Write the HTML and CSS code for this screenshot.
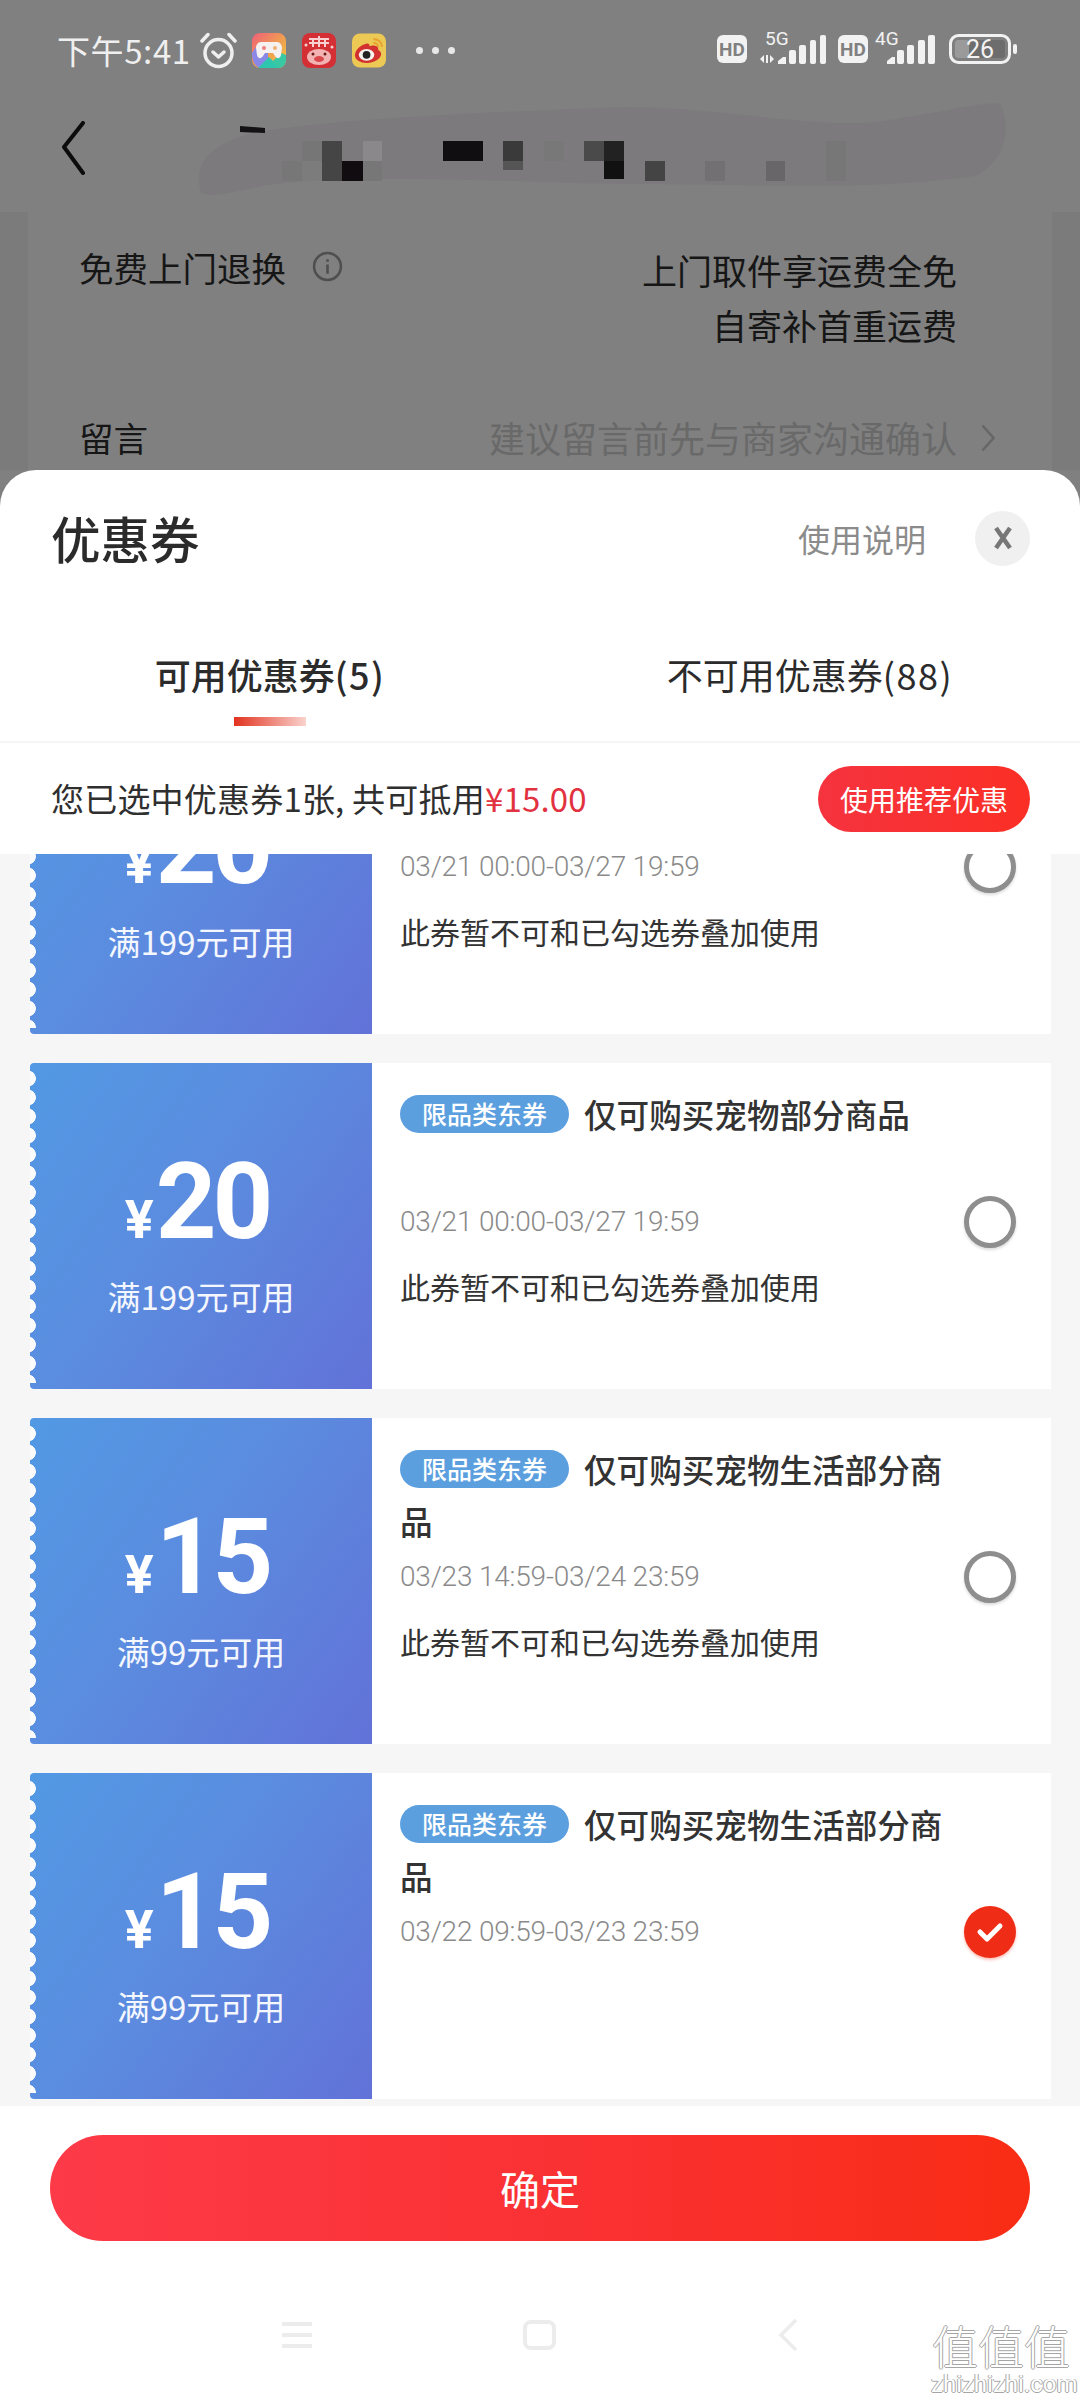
FILE: index.html
```html
<!DOCTYPE html>
<html lang="zh-CN">
<head>
<meta charset="utf-8">
<title>优惠券</title>
<link rel="stylesheet" href="styles.css">
</head>
<body>
<div class="page">
  <div class="backdrop">
    <div class="statusbar">
      <div class="status-left">
        <span class="clock">下午5:41</span>
        <svg class="alarm" viewBox="0 0 37 37" fill="none" stroke="#efefef" stroke-width="3.500" stroke-linecap="round" stroke-linejoin="round">
          <circle cx="18.500" cy="21" r="13.500"/>
          <path d="M2 9 8 2.500M35 9 29 2.500"/>
          <path d="M13 20l5.500 5 5.500-5"/>
        </svg>
        <svg class="app app-first" viewBox="0 0 34 35">
          <defs>
            <linearGradient id="gameA" x1="0" y1="0" x2="1" y2="1">
              <stop offset="0" stop-color="#ef5f7a"/><stop offset=".55" stop-color="#f0a050"/><stop offset="1" stop-color="#f2cb3f"/>
            </linearGradient>
          </defs>
          <rect width="34" height="35" rx="8" fill="url(#gameA)"/>
          <path d="M0 20C0 30 4 35 10 35H16V20L4 14Z" fill="#8a88e6"/>
          <path d="M6 35 17 24 28 35Z" fill="#2fc6b0"/>
          <path d="M34 22V27C34 32 30 35 26 35L20 29 29 20Z" fill="#38c8a4"/>
          <path d="M9 9H25C28 9 30 12 30 15L29 22C28 26 25 26 23 23L21 20H13L11 23C9 26 6 26 5 22L4 15C4 12 6 9 9 9Z" fill="#f6f1f1"/>
          <circle cx="12" cy="15" r="2" fill="#ef7f80"/><circle cx="23" cy="15" r="2" fill="#f0b070"/>
        </svg>
        <svg class="app" viewBox="0 0 34 35">
          <rect width="34" height="35" rx="8" fill="#d32f35"/>
          <path d="M7 6H27M11 6V14M17 3V14M23 6V14M7 10H27" stroke="#f8d0d0" stroke-width="2" fill="none"/>
          <circle cx="4" cy="12" r="1.500" fill="#f8d0d0"/><circle cx="30" cy="14" r="1.500" fill="#f8d0d0"/>
          <ellipse cx="17" cy="24" rx="12" ry="8" fill="#f3b3b3"/>
          <circle cx="11" cy="21" r="1.500" fill="#6b1a1a"/><circle cx="23" cy="21" r="1.500" fill="#6b1a1a"/>
          <ellipse cx="17" cy="26" rx="5" ry="3" fill="#d9484c"/>
        </svg>
        <svg class="app" viewBox="0 0 35 35">
          <rect width="35" height="35" rx="8" fill="#ecc855"/>
          <path d="M13 11C7 13 3 18 3 23 4 29 11 31 18 30 25 29 30 25 30 21 30 18 27 18 27 16 27 12 21 12 18 13 18 10 16 10 13 11Z" fill="#d3312f"/>
          <ellipse cx="15" cy="22" rx="8" ry="6" fill="#f7f2ee"/>
          <circle cx="15" cy="22" r="4" fill="#222"/>
          <path d="M22 6A8 8 0 0 1 31 14M22 10A4 4 0 0 1 27 14" stroke="#e8a030" stroke-width="2" fill="none"/>
        </svg>
        <span class="dots"><i class="dot"></i><i class="dot"></i><i class="dot"></i></span>
      </div>
      <svg class="status-right" viewBox="0 0 300 40">
        <rect x="0" y="5" width="30" height="28" rx="6" fill="#f2f2f2"/>
        <text class="hd" x="15" y="25.500" text-anchor="middle">HD</text>
        <text class="net" x="48" y="15">5G</text>
        <path d="M43 29l4-4v8zM49 25h2v8h-2zM53 25l4 4-4 4z" fill="#f2f2f2"/>
        <g fill="#f2f2f2">
          <path d="M61 34v-3l5-4h3v7z"/>
          <rect x="72" y="20" width="7" height="14" rx="2"/>
          <rect x="82" y="15" width="7" height="19" rx="2"/>
          <rect x="93" y="10" width="6" height="24" rx="2"/>
          <rect x="103" y="5" width="6" height="29" rx="2"/>
        </g>
        <rect x="121" y="5" width="30" height="28" rx="6" fill="#f2f2f2"/>
        <text class="hd" x="136" y="25.500" text-anchor="middle">HD</text>
        <text class="net" x="158" y="15">4G</text>
        <g fill="#f2f2f2">
          <path d="M170 34v-3l5-4h3v7z"/>
          <rect x="180" y="20" width="7" height="14" rx="2"/>
          <rect x="190" y="15" width="7" height="19" rx="2"/>
          <rect x="201" y="10" width="7" height="24" rx="2"/>
          <rect x="211" y="5" width="7" height="29" rx="2"/>
        </g>
        <rect x="233.500" y="5.500" width="59" height="27" rx="8" fill="none" stroke="#f2f2f2" stroke-width="3"/>
        <rect x="238" y="10" width="50" height="18" rx="3" fill="#6d6d6d"/>
        <rect x="238" y="10" width="14" height="18" rx="3" fill="#9a9a9a"/>
        <text class="batt" x="263" y="28" text-anchor="middle">26</text>
        <rect x="296" y="14" width="4" height="10" rx="2" fill="#f2f2f2"/>
      </svg>
    </div>
    <div class="navbar">
      <svg class="nav-back" viewBox="0 0 24 54" fill="none" stroke="#0c0c0c" stroke-width="4" stroke-linecap="round" stroke-linejoin="round">
        <path d="M22 2 3 26 22 52"/>
      </svg>
      <svg class="nav-mask" viewBox="0 0 820 100" aria-hidden="true">
        <path d="M5 92C-5 60 20 42 60 32 150 18 300 12 400 8 500 2 600 28 680 22 740 14 790 0 805 4 815 30 810 60 780 76 660 92 560 84 440 84 340 84 180 72 80 84 40 90 12 100 5 92Z" fill="#7d7a7d"/>
        <path d="M44 26 69 28V33L44 32Z" fill="#141214"/>
        <g shape-rendering="crispEdges">
          <rect x="106" y="41" width="20" height="20" fill="#767676"/>
          <rect x="126" y="41" width="20" height="40" fill="#454545"/>
          <rect x="167" y="41" width="19" height="20" fill="#8b888b"/>
          <rect x="86" y="61" width="20" height="20" fill="#777"/>
          <rect x="106" y="61" width="20" height="20" fill="#7c7c7c"/>
          <rect x="146" y="61" width="21" height="20" fill="#100c10"/>
          <rect x="167" y="61" width="19" height="20" fill="#777"/>
          <rect x="247" y="41" width="40" height="20" fill="#100e10"/>
          <rect x="307" y="41" width="20" height="20" fill="#3a3a3a"/>
          <rect x="307" y="61" width="20" height="9" fill="#555"/>
          <rect x="348" y="41" width="20" height="20" fill="#787878"/>
          <rect x="388" y="41" width="20" height="20" fill="#4a4a4a"/>
          <rect x="408" y="41" width="20" height="20" fill="#222"/>
          <rect x="408" y="61" width="20" height="18" fill="#111"/>
          <rect x="449" y="61" width="20" height="20" fill="#444"/>
          <rect x="509" y="61" width="20" height="20" fill="#737073"/>
          <rect x="570" y="61" width="19" height="20" fill="#686668"/>
          <rect x="630" y="41" width="20" height="40" fill="#777"/>
        </g>
      </svg>
    </div>
    <div class="under">
      <div class="under-card">
        <div class="under-row">
          <div class="under-label">免费上门退换
            <svg class="info" viewBox="0 0 30 30" fill="none" stroke="#4f4f4f" stroke-width="2.500">
              <circle cx="15" cy="15" r="13"/>
              <path d="M15 13v9M15 8v2.500"/>
            </svg>
          </div>
          <div class="under-right">上门取件享运费全免<br>自寄补首重运费</div>
        </div>
        <div class="under-row under-row-msg">
          <div class="under-label">留言</div>
          <div class="under-hint">建议留言前先与商家沟通确认
            <svg class="hint-arrow" viewBox="0 0 14 28" fill="none" stroke="#666" stroke-width="2.500">
              <path d="M1.500 1.500 12.500 14 1.500 26.500"/>
            </svg>
          </div>
        </div>
      </div>
    </div>
  </div>

  <div class="sheet">
    <div class="sheet-head">
      <h1 class="sheet-title">优惠券</h1>
      <div class="head-actions">
        <span class="help">使用说明</span>
        <span class="close">
          <svg class="close-x" viewBox="0 0 20 24" fill="none" stroke="#777" stroke-width="4.500">
            <path d="M3 2 17 22M17 2 3 22"/>
          </svg>
        </span>
      </div>
    </div>
    <div class="tabs">
      <div class="tab tab-active">可用优惠券<span class="tab-count">(5)</span><i class="tab-line"></i></div>
      <div class="tab">不可用优惠券<span class="tab-count">(88)</span></div>
    </div>
    <div class="summary">
      <span class="summary-text">您已选中优惠券1张, 共可抵用<em class="summary-price">¥15.00</em></span>
      <span class="recommend">使用推荐优惠</span>
    </div>
    <div class="list">
      <div class="coupon">
        <div class="ticket">
          <div class="amount"><span class="yen">¥</span><span class="num">20</span></div>
          <div class="limit">满199元可用</div>
        </div>
        <div class="detail">
          <div class="title"></div>
          <div class="date">03/21 00:00-03/27 19:59</div>
          <div class="note">此券暂不可和已勾选券叠加使用</div>
        </div>
        <span class="radio"></span>
      </div>
      <div class="coupon">
        <div class="ticket">
          <div class="amount"><span class="yen">¥</span><span class="num">20</span></div>
          <div class="limit">满199元可用</div>
        </div>
        <div class="detail">
          <div class="title"><span class="tag">限品类东券</span>仅可购买宠物部分商品</div>
          <div class="date">03/21 00:00-03/27 19:59</div>
          <div class="note">此券暂不可和已勾选券叠加使用</div>
        </div>
        <span class="radio"></span>
      </div>
      <div class="coupon">
        <div class="ticket">
          <div class="amount"><span class="yen">¥</span><span class="num">15</span></div>
          <div class="limit">满99元可用</div>
        </div>
        <div class="detail">
          <div class="title"><span class="tag">限品类东券</span>仅可购买宠物生活部分商品</div>
          <div class="date">03/23 14:59-03/24 23:59</div>
          <div class="note">此券暂不可和已勾选券叠加使用</div>
        </div>
        <span class="radio"></span>
      </div>
      <div class="coupon">
        <div class="ticket">
          <div class="amount"><span class="yen">¥</span><span class="num">15</span></div>
          <div class="limit">满99元可用</div>
        </div>
        <div class="detail">
          <div class="title"><span class="tag">限品类东券</span>仅可购买宠物生活部分商品</div>
          <div class="date">03/22 09:59-03/23 23:59</div>
        </div>
        <span class="radio radio-on">
          <svg class="check" viewBox="0 0 28 22" fill="none" stroke="#fff" stroke-width="5" stroke-linecap="round" stroke-linejoin="round">
            <path d="M4 11l7 7L24 5"/>
          </svg>
        </span>
      </div>
    </div>
    <div class="footer">
      <button class="confirm" type="button">确定</button>
    </div>
    <div class="sysnav">
      <svg class="sys-menu" viewBox="0 0 30 26" fill="#ececec">
        <rect y="0" width="30" height="4"/><rect y="11" width="30" height="4"/><rect y="22" width="30" height="4"/>
      </svg>
      <svg class="sys-home" viewBox="0 0 33 30" fill="none" stroke="#ececec" stroke-width="4">
        <rect x="2" y="2" width="29" height="26" rx="6"/>
      </svg>
      <svg class="sys-back" viewBox="0 0 20 32" fill="none" stroke="#ececec" stroke-width="3.500">
        <path d="M18 1 3 16 18 31"/>
      </svg>
    </div>
    <div class="watermark">
      <div class="wm-mark">值值值</div>
      <div class="wm-url">zhizhizhi.com</div>
    </div>
  </div>
</div>
</body>
</html>
```

FILE: styles.css
```css
* { box-sizing: border-box; }
html, body { margin: 0; padding: 0; }
body {
  width: 1080px;
  height: 2400px;
  overflow: hidden;
  font-family: "Noto Sans CJK SC", "Noto Sans", sans-serif;
  color: #222;
}
.page {
  width: 1080px;
  height: 2400px;
  display: flex;
  flex-direction: column;
  background: #808080;
}

/* dimmed page behind the sheet */
.backdrop { height: 470px; flex: none; overflow: hidden; display: flex; flex-direction: column; }
.statusbar {
  height: 100px;
  flex: none;
  display: flex;
  align-items: center;
  justify-content: space-between;
  padding: 0 63px 0 57px;
}
.status-left { display: flex; align-items: center; }
.clock { font-size: 33px; line-height: 40px; letter-spacing: .6px; color: #efefef; width: 143px; white-space: nowrap; }
.alarm { width: 37px; height: 37px; margin-right: 15px; }
.app { width: 34px; height: 35px; margin-right: 16px; }
.dots { display: flex; gap: 9px; margin-left: 14px; }
.dot { width: 7px; height: 7px; border-radius: 50%; background: #e8e8e8; }
.status-right { width: 300px; height: 40px; overflow: visible; }
.hd { font: 700 19px "Roboto", sans-serif; fill: #808080; }
.net { font: 400 19px "Roboto", sans-serif; fill: #f2f2f2; }
.batt { font: 400 25px "Roboto", sans-serif; fill: #f2f2f2; }

.navbar { height: 112px; flex: none; display: flex; align-items: flex-start; position: relative; }
.nav-back { width: 24px; height: 54px; margin: 21px 0 0 61px; }
.nav-mask { width: 820px; height: 100px; margin: 0 0 0 111px; }

.under { flex: 1; background: #7b7b7b; padding: 0 28px; }
.under-card { height: 100%; background: #808080; padding: 30px 95px 0 51px; }
.under-row { display: flex; justify-content: space-between; align-items: flex-start; }
.under-row-msg { margin-top: 58px; margin-right: -38px; }
.under-label { font-size: 34.500px; line-height: 55px; color: #161616; display: flex; align-items: center; }
.under-row:first-child .under-label { margin-top: -2px; }
.info { width: 31px; height: 31px; margin: -3px 0 0 26px; }
.under-right { font-size: 35px; line-height: 55px; color: #161616; text-align: right; }
.under-hint { font-size: 36px; line-height: 55px; color: #696969; display: flex; align-items: center; white-space: nowrap; }
.hint-arrow { width: 14px; height: 28px; margin-left: 24px; }

/* bottom sheet */
.sheet {
  flex: 1;
  position: relative;
  background: #fff;
  border-radius: 36px 36px 0 0;
  display: flex;
  flex-direction: column;
  overflow: hidden;
}
.sheet-head {
  height: 136px;
  flex: none;
  display: flex;
  align-items: center;
  justify-content: space-between;
  padding: 0 50px 0 51px;
}
.sheet-title { margin: 0; font-size: 49.500px; line-height: 60px; font-weight: 500; color: #2b2b2b; }
.head-actions { display: flex; align-items: center; gap: 49px; }
.help { font-size: 32px; line-height: 44px; color: #8b8b8b; }
.close { width: 55px; height: 55px; border-radius: 50%; background: #f0f0f0; display: flex; align-items: center; justify-content: center; }
.close-x { width: 20px; height: 24px; }

.tabs { height: 137px; flex: none; display: flex; border-bottom: 2px solid #f5f5f5; }
.tab { width: 540px; position: relative; text-align: center; font-size: 36px; line-height: 50px; padding-top: 43px; color: #2b2b2b; }
.tab-active { font-weight: 500; }
.tab-count { letter-spacing: 1.500px; }
.tab-line {
  display: block;
  width: 72px;
  height: 9px;
  margin: 18px auto 0;
  background: linear-gradient(90deg, #e2321f, #f9d3cd);
}

.summary {
  height: 111px;
  flex: none;
  display: flex;
  align-items: center;
  justify-content: space-between;
  padding: 0 50px 0 51px;
}
.summary-text { font-size: 33px; line-height: 44px; letter-spacing: .2px; color: #2f2f2f; white-space: nowrap; margin-top: -2px; }
.summary-price { font-style: normal; color: #e2323f; }
.recommend {
  width: 212px;
  height: 66px;
  border-radius: 33px;
  display: flex;
  align-items: center;
  justify-content: center;
  font-size: 28px;
  color: #fff;
  background: linear-gradient(90deg, #f5333f, #fb2f25);
}

/* coupons: the list is pinned to its bottom, so the first card is cut at the top */
.list {
  height: 1252px;
  flex: none;
  display: flex;
  flex-direction: column;
  justify-content: flex-end;
  gap: 29px;
  padding: 0 29px 7px 30px;
  background: #f6f6f6;
  overflow: hidden;
}
.coupon {
  height: 326px;
  flex: none;
  display: flex;
  background: #fff;
  position: relative;
}
.ticket {
  width: 342px;
  flex: none;
  position: relative;
  display: flex;
  flex-direction: column;
  align-items: center;
  padding-top: 89px;
  color: #fff;
  background: linear-gradient(125deg, #5299e4 0%, #5b8cdf 45%, #6272d8 100%);
  border-radius: 4px 0 0 4px;
}
.ticket::before {
  content: "";
  position: absolute;
  left: 0;
  top: 6px;
  bottom: 6px;
  width: 6px;
  background: radial-gradient(circle at -2px 50%, #fbfbfb 7.500px, transparent 8.200px) 0 0 / 6px 19px repeat-y;
}
.amount { height: 100px; display: flex; align-items: baseline; line-height: 100px; font-family: "Roboto", sans-serif; font-weight: 700; margin-left: -8px; }
.yen { font-size: 54px; margin-right: 2px; }
.num { font-size: 106px; letter-spacing: -4px; }
.limit { margin-top: 24px; font-size: 33px; line-height: 40px; color: #f4f7fe; white-space: nowrap; }

.detail { flex: 1; padding: 25px 80px 0 28px; }
.title { height: 106px; margin-bottom: 8px; font-size: 32.600px; line-height: 52px; font-weight: 500; color: #333; }
.tag {
  display: inline-block;
  width: 169px;
  height: 38px;
  margin-right: 15px;
  border-radius: 19px;
  background: #5b9fdf;
  color: #fff;
  text-align: center;
  font-size: 25px;
  line-height: 37px;
  font-weight: 500;
  vertical-align: 4px;
}
.date { font-family: "Roboto", sans-serif; font-weight: 300; font-size: 28px; line-height: 40px; letter-spacing: -.2px; color: #8a8a8a; white-space: nowrap; }
.note { margin-top: 24px; font-size: 30px; line-height: 40px; color: #333; white-space: nowrap; }

.radio {
  position: absolute;
  left: 934px;
  top: 133px;
  width: 52px;
  height: 52px;
  border-radius: 50%;
  border: 5px solid #8e8e8e;
  background: #fff;
  box-shadow: 0 2px 3px rgba(0, 0, 0, .15);
}
.radio-on { border: 0; background: #ef2d16; display: flex; align-items: center; justify-content: center; box-shadow: 0 2px 3px rgba(239, 45, 22, .3); }
.check { width: 28px; height: 22px; }

.footer { height: 136px; flex: none; padding: 29px 50px 0; }
.confirm {
  display: block;
  width: 980px;
  height: 106px;
  border: 0;
  border-radius: 53px;
  font-family: inherit;
  font-size: 40px;
  font-weight: 400;
  color: #fff;
  background: linear-gradient(90deg, #fd3a48 0%, #fa3030 60%, #f92c14 100%);
}
.sysnav { height: 30px; margin-top: 78px; flex: none; position: relative; display: flex; align-items: center; padding-left: 282px; }
.sys-menu { width: 30px; height: 26px; }
.sys-home { width: 33px; height: 30px; margin-left: 211px; }
.sys-back { width: 20px; height: 32px; margin-left: 222px; }

.watermark { position: absolute; right: 9px; bottom: 8px; width: 140px; text-align: center; color: #fff; }
.wm-mark { font-size: 46px; line-height: 46px; height: 46px; margin-bottom: 9px; white-space: nowrap; font-weight: 300; text-shadow: 1px 0 #a5a5a5, -1px 0 #a5a5a5, 0 1px #a5a5a5, 0 -1px #a5a5a5; }
.wm-url { font-family: "Roboto", sans-serif; font-size: 24px; line-height: 16px; height: 16px; white-space: nowrap; color: #fff; text-shadow: 1px 0 #a5a5a5, -1px 0 #a5a5a5, 0 1px #a5a5a5; }
```
